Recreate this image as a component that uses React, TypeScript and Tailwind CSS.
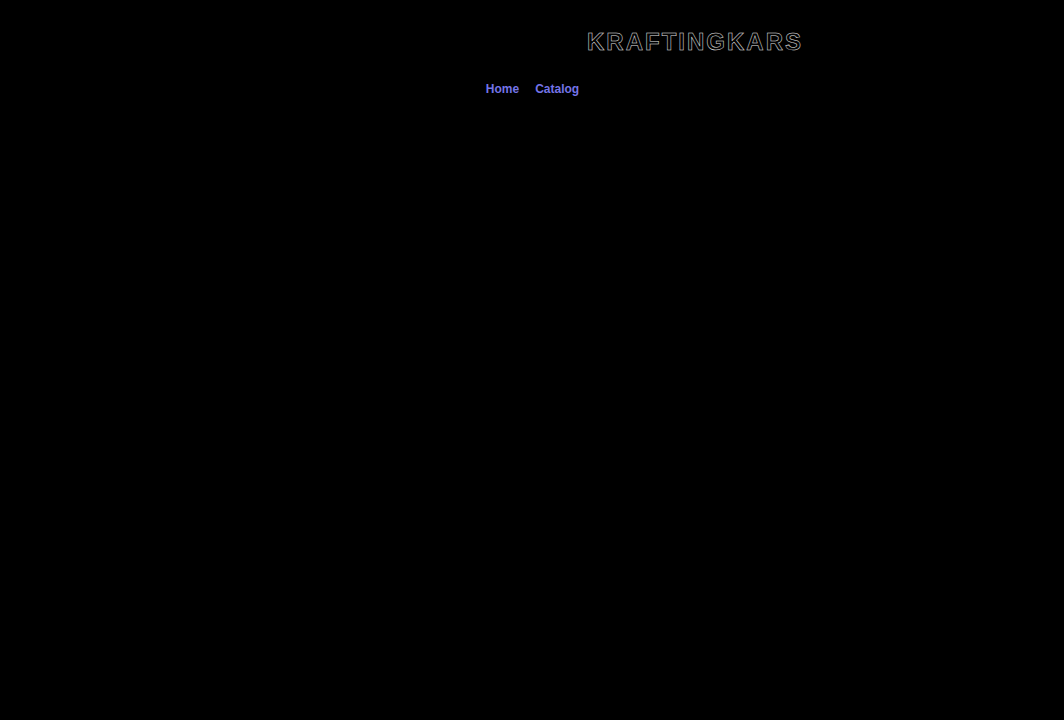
export default function App() {
  return (
    <div className="min-h-[720px] w-full bg-black font-['Liberation_Sans',Arial,sans-serif]">
      <header className="flex justify-center pt-[28px] pl-[326px]">
        <h1 className="text-[24px] leading-[28px] font-bold tracking-[2px] text-black [-webkit-text-stroke:0.5px_#e5e5e5]">
          KRAFTINGKARS
        </h1>
      </header>
      <nav className="flex justify-center gap-[16px] pt-[26px] pl-[1px] text-[12px] leading-[14px] font-bold">
        <a href="#" className="text-[#7474e8]">Home</a>
        <a href="#" className="text-[#7474e8]">Catalog</a>
      </nav>
    </div>
  );
}
